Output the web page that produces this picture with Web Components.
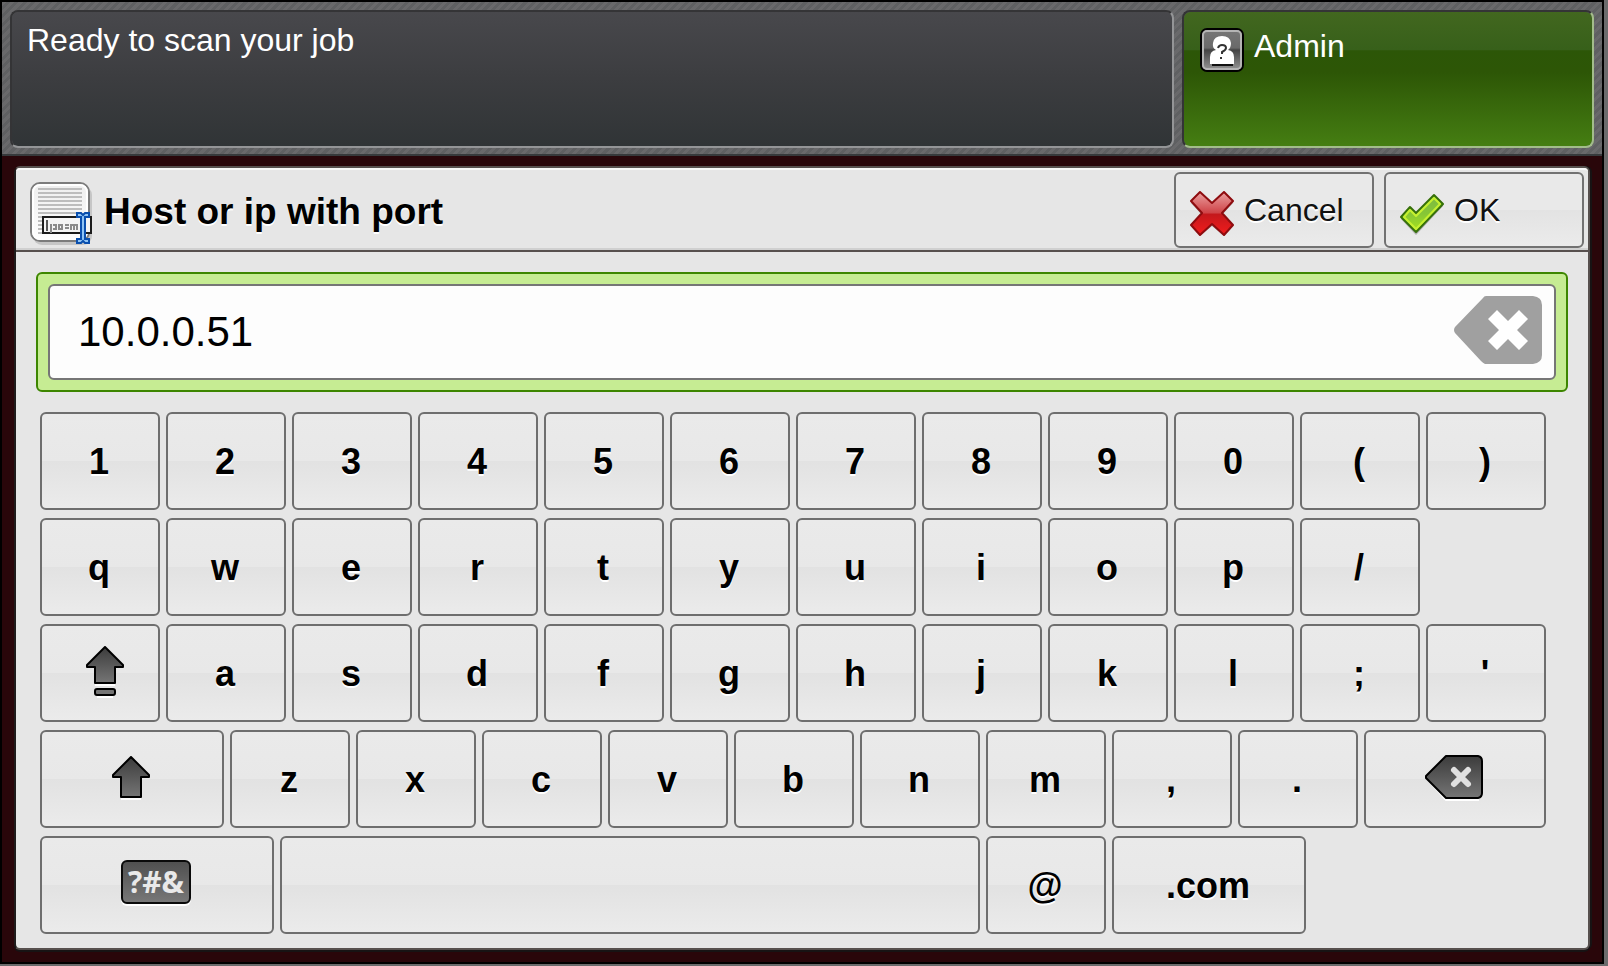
<!DOCTYPE html>
<html lang="en">
<head>
<meta charset="utf-8">
<title>Host or ip with port</title>
<style>
  html { background: #6b6b6c; }
  body { margin: 0; font-family: "Liberation Sans", Arial, sans-serif; }
</style>
</head>
<body>
<printer-screen></printer-screen>

<template id="screen-template">
  <style>
    :host { display: block; box-sizing: border-box; min-height: 100vh; padding: 0 4px 2px 0; }
    .frame { box-sizing: border-box; min-height: calc(100vh - 2px); border: 2px solid #000; background: #29060a; }
    header {
      display: flex; gap: 8px; padding: 8px 8px 6px; border-bottom: 2px solid #36393b;
      background: repeating-linear-gradient(135deg, #69696b 0 3px, #5f6062 3px 6px);
    }
    status-panel { flex: 1; }
    main { padding: 10px 12px; }
  </style>
  <div class="frame">
    <header>
      <status-panel>Ready to scan your job</status-panel>
      <user-panel>Admin</user-panel>
    </header>
    <main><entry-dialog></entry-dialog></main>
  </div>
</template>

<template id="status-template">
  <style>
    :host {
      display: block; box-sizing: border-box; height: 138px; padding: 10px 15px; border-radius: 8px;
      border: 2px solid; border-color: #343436 #949597 #949597 #343436;
      background: linear-gradient(#48484c, #3c3d40 50%, #303436) padding-box;
      color: #fff; font-size: 32px; line-height: 36px;
    }
  </style>
  <slot></slot>
</template>

<template id="user-template">
  <style>
    :host {
      display: block; box-sizing: border-box; width: 412px; height: 138px; border-radius: 8px;
      border: 2px solid; border-color: #343436 #a3bd8b #a3bd8b #343436;
      background: linear-gradient(#42671f, #37601a 28%, #2c5607 29%, #2d5606 45%, #457e12) padding-box;
      color: #fff;
    }
    button {
      display: flex; gap: 10px; align-items: flex-start; padding: 16px; border: 0; background: none;
      color: inherit; font: 32px/36px "Liberation Sans", Arial, sans-serif;
    }
    svg { display: block; }
  </style>
  <button type="button">
    <svg width="44" height="44" viewBox="0 0 44 44" aria-hidden="true">
      <defs><linearGradient id="g" x2="0" y2="1"><stop offset="0" stop-color="#777"/><stop offset=".45" stop-color="#6a6a6a"/><stop offset=".5" stop-color="#444"/><stop offset="1" stop-color="#999"/></linearGradient></defs>
      <rect x="1" y="1" width="42" height="42" rx="6" fill="url(#g)" stroke="#000" stroke-width="2"/>
      <rect x="3" y="3" width="38" height="38" rx="4" fill="none" stroke="#b4b4b4" stroke-width="2"/>
      <path d="M12 37h21" stroke="#111" stroke-width="2"/>
      <path d="M10 36V29Q10 23 16 22Q12 20 13 15Q14 8 22 8Q30 8 31 15Q31 20 28 22Q34 23 34 29V36Z" fill="#fff"/>
      <path d="M18 20Q19 17 22 17Q26 17 26 20Q26 22 22 24V26M21 29v2" fill="none" stroke="#333" stroke-width="2"/>
    </svg>
    <slot></slot>
  </button>
</template>

<template id="dialog-template">
  <style>
    :host {
      display: block; box-sizing: border-box; border: 2px solid; border-color: #57504e #57504e #57504e #1e1b1b;
      border-radius: 6px; background: #e6e6e6; color: #000; box-shadow: 0 2px 0 #171314, 2px 0 0 #171314;
    }
    .bar {
      display: flex; align-items: center; gap: 10px; height: 84px; box-sizing: border-box; padding: 2px 4px 2px 14px;
      border-top: 2px solid #f8f8f8; border-bottom: 2px solid #57504e; border-radius: 4px 4px 0 0;
      box-shadow: inset 0 -2px #d0d0d0;
    }
    h1 { flex: 1; margin: 4px 0 0; font-size: 37px; line-height: 42px; text-shadow: 0 2px #fff; }
    .bar > svg { flex: none; margin-top: 10px; }
    .fields { padding: 20px 20px 14px; }
    .keys { padding-right: 22px; padding-left: 4px; }
  </style>
  <div class="bar">
    <svg width="64" height="66" viewBox="0 0 64 66" aria-hidden="true">
      <defs><linearGradient id="p" x2="0" y2="1"><stop offset="0" stop-color="#eee"/><stop offset="1" stop-color="#fff"/></linearGradient></defs>
      <rect x="3" y="4" width="59" height="59" rx="9" fill="#c6c6c6"/>
      <rect x="1" y="1" width="58" height="58" rx="9" fill="url(#p)" stroke="#7c7c7c" stroke-width="2"/>
      <rect x="3" y="3" width="54" height="54" rx="7" fill="none" stroke="#fff" stroke-width="2"/>
      <path d="M8 7H52M8 11H52M8 15H52M8 19H52M8 23H52M8 27H52M8 31H52M8 35H13M8 39H13M8 43H13M8 47H13M8 51H13" stroke="#bdbdbd" stroke-width="2"/>
      <rect x="13" y="35" width="48" height="16" fill="#f4f4f4" stroke="#1c1c1c" stroke-width="2"/>
      <path d="M17 38v11" stroke="#555" stroke-width="2"/>
      <path d="M21 42v9M23 43h3v4h-3M29 43h3v4h-3zM35 43h4M35 46h4M41 48v-6M44 48v-6M47 48v-6M40 43h7" fill="none" stroke="#8a8a8a" stroke-width="2"/>
      <path d="M47 31h4l2 2 2-2h4v4h-4v22h4v4h-4l-2-2-2 2h-4v-4h4V35h-4z" fill="#8fc4f5" stroke="#0a4fae" stroke-width="2"/>
    </svg>
    <h1>Host or ip with port</h1>
    <action-button>
      <svg slot="icon" width="44" height="46" viewBox="0 0 44 46" aria-hidden="true">
        <defs><linearGradient id="r" x2="0" y2="1"><stop offset="0" stop-color="#eaa0a0"/><stop offset=".48" stop-color="#cf4448"/><stop offset=".52" stop-color="#c4181c"/><stop offset="1" stop-color="#f21c1c"/></linearGradient></defs>
        <path d="M10 3L22 13 34 3 43 12 32 24 43 35 34 45 22 35 10 45 1 35 12 24 1 12z" fill="#aaa"/>
        <path d="M10 1L22 12 34 1 43 10 32 22 43 34 34 44 22 33 10 44 1 34 12 22 1 10z" fill="url(#r)" stroke="#8e0c0f" stroke-width="2" stroke-linejoin="round"/>
      </svg>
      Cancel
    </action-button>
    <action-button>
      <svg slot="icon" width="44" height="46" viewBox="0 -2 44 46" aria-hidden="true">
        <defs><linearGradient id="k" x2="0" y2="1"><stop offset="0" stop-color="#7db943"/><stop offset=".5" stop-color="#86c636"/><stop offset="1" stop-color="#a9e41c"/></linearGradient></defs>
        <path d="M1 26L10 16 16 22 34 4 43 13 16 42z" fill="#aaa"/>
        <path d="M1 24L10 14 16 20 34 2 43 11 16 39z" fill="url(#k)" stroke="#36700a" stroke-width="2" stroke-linejoin="round"/>
        <path d="M4 24L10 17 16 23 34 5 40 11 16 36z" fill="none" stroke="#c5f030" stroke-width="2" stroke-linejoin="round"/>
      </svg>
      OK
    </action-button>
  </div>
  <div class="fields">
    <text-entry></text-entry>
    <div class="keys"><key-board></key-board></div>
  </div>
</template>

<template id="action-template">
  <style>
    :host { display: block; }
    button {
      display: flex; align-items: center; gap: 10px; box-sizing: border-box; width: 200px; height: 76px;
      padding: 0 14px; border: 2px solid #727272; border-radius: 6px; color: #111;
      background: linear-gradient(#e9e9e9 50%, #e3e3e3 50%, #ebebeb);
      font: 32px/36px "Liberation Sans", Arial, sans-serif; text-shadow: 0 2px #fff;
    }
    ::slotted(svg) { display: block; margin-top: 8px; }
  </style>
  <button type="button"><slot name="icon"></slot><span><slot></slot></span></button>
</template>

<template id="entry-template">
  <style>
    :host { display: block; }
    .ring { border: 2px solid #3d8600; border-radius: 6px; background: #c6ec93; padding: 10px; }
    .box { display: flex; align-items: center; box-sizing: border-box; height: 96px; padding: 0 12px 0 28px; border: 2px solid #767676; border-radius: 6px; background: #fdfdfd; }
    input { flex: 1; min-width: 0; padding: 0; border: 0; outline: 0; background: none; color: #000; font: 42px/48px "Liberation Sans", Arial, sans-serif; }
    button { flex: none; padding: 0 0 4px; border: 0; background: none; }
    svg { display: block; }
  </style>
  <div class="ring"><div class="box">
    <input type="text" aria-label="Host or ip with port" value="10.0.0.51">
    <button type="button" aria-label="Clear">
      <svg width="88" height="68" viewBox="0 0 88 68" aria-hidden="true">
        <path d="M32 0H79Q88 1 88 9V59Q88 67 79 68H31Q29 67 27 65L1 37Q-1 34 1 31L29 2Q30 0 32 0Z" fill="#a0a0a0"/>
        <path d="M43 14L54 25 65 14 74 23 63 34 74 45 65 54 54 43 43 54 34 45 45 34 34 23z" fill="#fff"/>
      </svg>
    </button>
  </div></div>
</template>

<template id="keyboard-template">
  <style>
    :host { display: flex; flex-direction: column; gap: 8px; padding-top: 20px; }
    .row { display: flex; gap: 6px; }
    .gap { min-width: 0; }
    key-cap { min-width: 0; }
    svg { display: block; margin-bottom: 4px; }
    .caps { margin: 0 0 4px 12px; }
    .symbols {
      box-sizing: border-box; display: block; width: 70px; height: 44px; margin-bottom: 8px;
      border: 2px solid #0a0a0a; border-radius: 6px;
      background: linear-gradient(#505050, #777); box-shadow: 0 2px #fff; text-align: center;
      color: #e9e9e9; font: 700 30px/40px "Open Sans", sans-serif; text-shadow: none;
    }
  </style>
</template>

<template id="key-template">
  <style>
    :host { display: block; }
    button {
      display: flex; align-items: center; justify-content: center; box-sizing: border-box; width: 100%; height: 98px;
      padding: 2px 2px 0 0; border: 2px solid #6e6e6e; border-radius: 6px; color: #000;
      background: linear-gradient(#eaeaea, #e8e8e8 50%, #e2e2e2 50%, #ebebeb);
      font: 700 36px/40px "Liberation Sans", Arial, sans-serif; text-shadow: 0 2px #fff;
    }
  </style>
  <button type="button"><slot></slot></button>
</template>

<script>
  const define = (name, templateId, setup) => {
    customElements.define(name, class extends HTMLElement {
      constructor() {
        super();
        this.attachShadow({ mode: "open" })
          .append(document.getElementById(templateId).content.cloneNode(true));
        if (setup) setup(this.shadowRoot, this);
      }
    });
  };

  const gradient = id => `<defs><linearGradient id="${id}" x2="0" y2="1"><stop offset="0" stop-color="#3c3c3c"/><stop offset="1" stop-color="#757575"/></linearGradient></defs>`;
  const art = {
    caps: `<svg class="caps" width="38" height="52" viewBox="0 0 38 52">${gradient("c")}
      <path d="M9 39h20M11 51h16" stroke="#fff" stroke-width="2"/>
      <path d="M19 1L37 19V21H29V37H9V21H1V19z" fill="url(#c)" stroke="#000" stroke-width="2" stroke-linejoin="round"/>
      <rect x="9" y="43" width="20" height="6" rx="2" fill="#757575" stroke="#000" stroke-width="2"/></svg>`,
    shift: `<svg width="38" height="44" viewBox="0 0 38 44">${gradient("s")}
      <path d="M9 43h20" stroke="#fff" stroke-width="2"/>
      <path d="M19 1L37 19V21H29V41H9V21H1V19z" fill="url(#s)" stroke="#000" stroke-width="2" stroke-linejoin="round"/></svg>`,
    erase: `<svg width="58" height="46" viewBox="0 0 58 46">${gradient("e")}
      <path d="M2 24L21 45H54" fill="none" stroke="#fff" stroke-width="2"/>
      <path d="M21 1H53Q57 2 57 6V38Q57 42 53 43H21L1 23V21z" fill="url(#e)" stroke="#000" stroke-width="2" stroke-linejoin="round"/>
      <path d="M29 15L43 29M43 15L29 29" stroke="#e0e0e0" stroke-width="6" stroke-linecap="round"/></svg>`,
    symbols: `<span class="symbols">?#&amp;</span>`
  };
  const letters = text => [...text].map(label => ({ label }));
  const rows = [
    letters("1234567890()"),
    [...letters("qwertyuiop/"), { size: 120 }],
    [{ art: "caps", name: "Caps lock" }, ...letters("asdfghjkl;'")],
    [{ art: "shift", name: "Shift", size: 184 }, ...letters("zxcvbnm,."), { art: "erase", name: "Backspace", size: 182 }],
    [{ art: "symbols", name: "Symbols", size: 234 }, { name: "Space", size: 700 }, { label: "@" }, { label: ".com", size: 194 }, { size: 234 }]
  ];

  define("key-cap", "key-template", (root, host) => {
    const name = host.getAttribute("name");
    if (name) root.querySelector("button").setAttribute("aria-label", name);
  });
  define("key-board", "keyboard-template", root => {
    for (const keys of rows) {
      const row = document.createElement("div");
      row.className = "row";
      row.innerHTML = keys.map(({ label, art: icon, name, size = 120 }) => {
        const flex = `style="flex:${size} 1 0"`;
        if (!label && !name) return `<span class="gap" ${flex}></span>`;
        return `<key-cap ${flex}${name ? ` name="${name}"` : ""}>${icon ? art[icon] : label || ""}</key-cap>`;
      }).join("");
      root.append(row);
    }
  });
  define("text-entry", "entry-template");
  define("action-button", "action-template");
  define("entry-dialog", "dialog-template");
  define("user-panel", "user-template");
  define("status-panel", "status-template");
  define("printer-screen", "screen-template");
</script>
</body>
</html>
